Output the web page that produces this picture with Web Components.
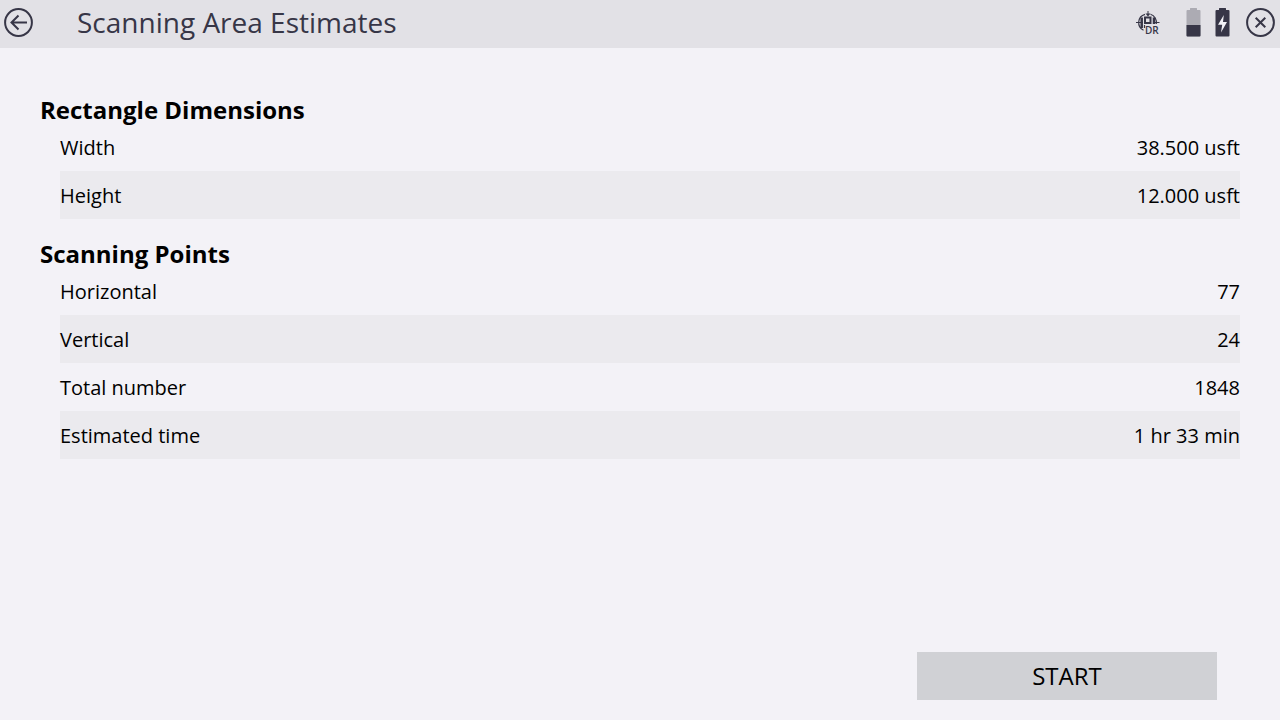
<!DOCTYPE html>
<html lang="en">
<head>
<meta charset="utf-8">
<title>Scanning Area Estimates</title>
<style>
  html, body { margin: 0; height: 100%; }
  body { background: #f3f2f7; color: #000; font-family: "Open Sans", "Noto Sans", sans-serif; }
</style>
</head>
<body>
<app-screen>
  <title-bar slot="header">Scanning Area Estimates
    <survey-icon slot="status"></survey-icon>
    <battery-icon slot="status" level="half"></battery-icon>
    <battery-icon slot="status" level="charging"></battery-icon>
  </title-bar>
  <estimate-section heading="Rectangle Dimensions">
    <estimate-row label="Width">38.500 usft</estimate-row>
    <estimate-row label="Height">12.000 usft</estimate-row>
  </estimate-section>
  <estimate-section heading="Scanning Points">
    <estimate-row label="Horizontal">77</estimate-row>
    <estimate-row label="Vertical">24</estimate-row>
    <estimate-row label="Total number">1848</estimate-row>
    <estimate-row label="Estimated time">1 hr 33 min</estimate-row>
  </estimate-section>
  <action-button slot="footer">START</action-button>
</app-screen>

<script>
function define(name, render) {
  customElements.define(name, class extends HTMLElement {
    constructor() {
      super();
      this.attachShadow({ mode: "open" });
    }
    connectedCallback() {
      this.shadowRoot.innerHTML = render(this);
    }
  });
}

define("app-screen", () => `
  <style>
    :host { display: flex; flex-direction: column; min-height: 100%; }
    main { flex: 1; padding: 27px 40px 0; }
    footer { display: flex; justify-content: flex-end; padding: 20px 63px 20px 40px; }
  </style>
  <slot name="header"></slot>
  <main><slot></slot></main>
  <footer><slot name="footer"></slot></footer>`);

define("title-bar", () => `
  <style>
    :host { display: block; background: #e2e1e6; color: #373647; }
    header { display: flex; align-items: center; height: 48px; box-sizing: border-box; padding: 0 5px 2px 4px; }
    h1 { flex: 1; margin: 0 0 0 44px; padding-bottom: 2px; font-size: 28px; line-height: 38px; font-weight: 400; }
    button { display: block; width: 29px; height: 30px; padding: 0; border: 0; background: none; color: inherit; }
    svg { display: block; width: 29px; height: 30px; }
    .status { display: flex; align-items: center; gap: 14px; margin-right: 16px; }
  </style>
  <header>
    <button type="button" aria-label="Back">
      <svg viewBox="0 0 29 30" fill="none" stroke="currentColor" stroke-width="2">
        <circle cx="14.5" cy="14.5" r="13.4"/>
        <path d="M23 14.5H8M14.5 7.5l-7 7 7 7"/>
      </svg>
    </button>
    <h1><slot></slot></h1>
    <div class="status"><slot name="status"></slot></div>
    <button type="button" aria-label="Close">
      <svg viewBox="0 0 29 30" fill="none" stroke="currentColor" stroke-width="2">
        <circle cx="14.5" cy="14.5" r="13.4"/>
        <path d="M9.7 9.7l9.6 9.6M19.3 9.7l-9.6 9.6"/>
      </svg>
    </button>
  </header>`);

define("survey-icon", () => `
  <style>
    :host { display: block; margin-right: 12px; }
    svg { display: block; width: 24px; height: 26px; }
    text { font: 600 10px "Open Sans", sans-serif; }
  </style>
  <svg viewBox="0 0 24 26" fill="none" stroke="currentColor" role="img" aria-label="DR">
    <path d="M9 4.300A8.600 8.600 0 0 0 7.500 20.300M14.500 4.300A8.600 8.600 0 0 1 20.300 14" stroke-width="1.200"/>
    <path d="M5.700 7.500v10.500M18 7.500v6.500" stroke-width="2.500"/>
    <path d="M12 1v4M0 12.500h7M17 12.500h6.500"/>
    <path d="M9.500 3.500h5l-2.500 3z" fill="currentColor" stroke="none"/>
    <rect x="9" y="7.500" width="5.500" height="5.500" stroke-width="2"/>
    <path d="M8.500 15v3" stroke-width="1.200"/>
    <text x="9" y="24" fill="currentColor" stroke="none">DR</text>
  </svg>`);

define("battery-icon", host => {
  const charging = host.getAttribute("level") === "charging";
  return `
  <style>
    :host { display: block; }
    svg { display: block; width: 15px; height: 30px; }
  </style>
  <svg viewBox="0 1 15 30" fill="currentColor" role="img" aria-label="Battery ${charging ? "charging" : "half full"}">
    <path d="M4 3V1.500Q4 1 4.500 1h6Q11 1 11 1.500V3h2.500Q14.500 3 14.500 4v24.500q0 1-1 1h-12q-1 0-1-1V4q0-1 1-1z" ${charging ? "" : 'fill="#acabb3"'}/>
    ${charging
      ? '<path d="M8.800 8L3 17.800h4.200L6 25.500 12 15H8z" fill="#f2f1f6"/>'
      : '<path d="M.5 18h14v10.500q0 1-1 1h-12q-1 0-1-1z"/>'}
  </svg>`;
});

define("estimate-section", host => `
  <style>
    :host { display: block; }
    h2 { margin: 0; padding: 22px 0 0; font-size: 24px; line-height: 26px; font-weight: 700; }
    div { padding-left: 20px; }
    ::slotted(:nth-child(even)) { background: #ebeaee; }
  </style>
  <section>
    <h2>${host.getAttribute("heading")}</h2>
    <div><slot></slot></div>
  </section>`);

define("estimate-row", host => `
  <style>
    :host { display: flex; justify-content: space-between; padding-top: 2px; font-size: 20px; line-height: 46px; }
  </style>
  <span>${host.getAttribute("label")}</span>
  <span><slot></slot></span>`);

define("action-button", () => `
  <style>
    :host { display: block; }
    button { display: block; width: 300px; height: 48px; padding: 0; border: 0; background: #d0d1d5;
      color: #000; font: inherit; font-size: 24px; line-height: 48px; }
  </style>
  <button type="button"><slot></slot></button>`);
</script>
</body>
</html>
